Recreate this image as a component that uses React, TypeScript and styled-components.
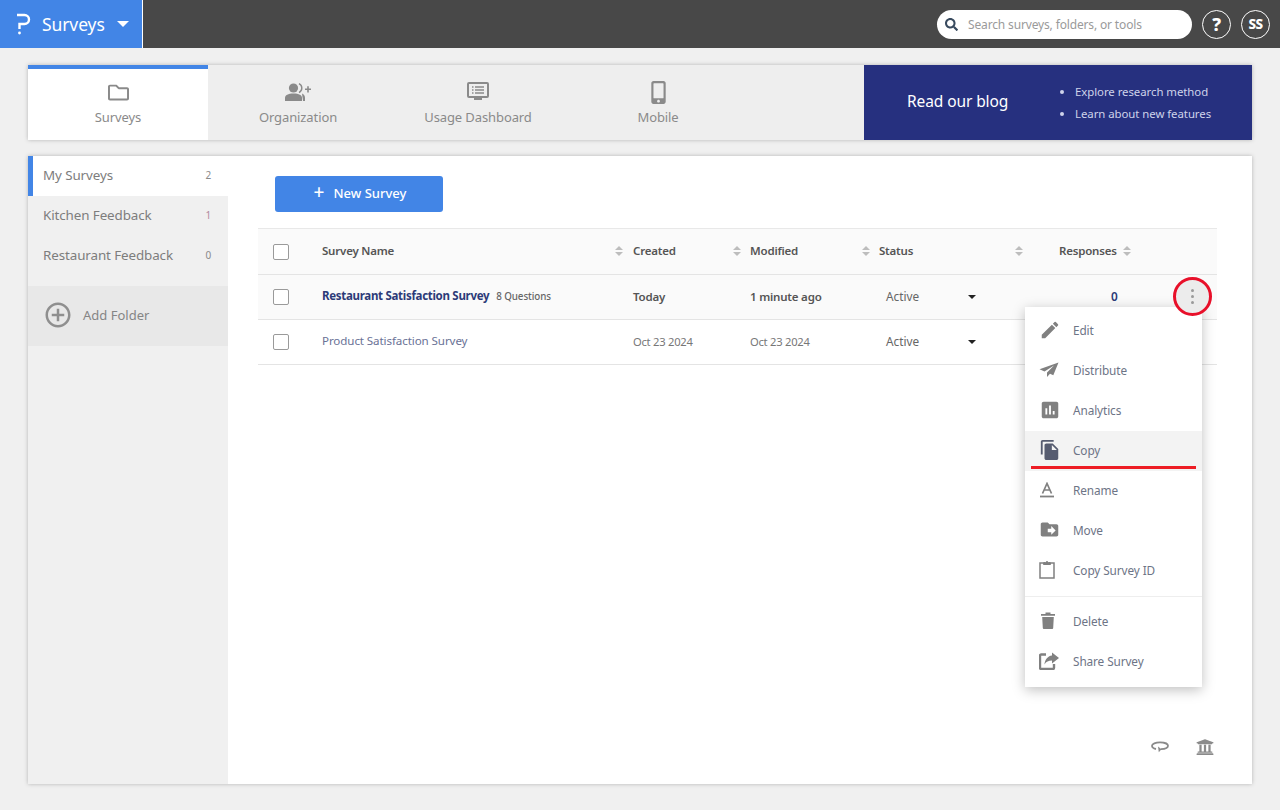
import React from "react";
import styled, { createGlobalStyle } from "styled-components";
import { FaRegFolder, FaSearch, FaUniversity, FaMobileAlt } from "react-icons/fa";
import { MdEdit, MdAssessment, MdFileCopy, MdDriveFileMove, MdAddCircleOutline } from "react-icons/md";

const Global = createGlobalStyle`
  html, body { margin: 0; padding: 0; background: #f0f0f0; }
  body { font-family: "Noto Sans", "Open Sans", sans-serif; width: 1280px; height: 810px; overflow: hidden; }
  * { box-sizing: border-box; }
`;

const Page = styled.div`display: flex; flex-direction: column; height: 810px;`;
const TopBar = styled.header`
  height: 48px; background: #484848; display: flex; align-items: center; justify-content: space-between; padding-right: 10px;
`;
const Brand = styled.div`
  width: 143px; height: 48px; background: #4285e6; border-right: 1px solid #fff; display: flex; align-items: center;
  padding-left: 16px; color: #fff; font-size: 17.5px; letter-spacing: -0.1px;
`;
const BrandName = styled.span`margin-left: 11px; margin-top: -1px;`;
const BrandCaret = styled.span`
  margin-left: 12px; width: 0; height: 0; border-left: 6px solid transparent; border-right: 6px solid transparent; border-top: 6px solid #fff;
`;
const TopRight = styled.div`display: flex; align-items: center; gap: 10px;`;
const Search = styled.div`
  width: 255px; height: 29px; border-radius: 15px; background: #fff; display: flex; align-items: center; padding-left: 8px;
  color: #9a9a9a; font-size: 12px; letter-spacing: -0.15px;
  svg { color: #384a5e; margin-right: 10px; }
`;
const RoundBtn = styled.div<{ $size: number }>`
  width: 29px; height: 29px; border-radius: 50%; border: 1px solid #fff; color: #fff; display: flex; align-items: center; justify-content: center;
  font-weight: 800; font-size: ${p => p.$size}px; letter-spacing: -0.5px;
`;

const Body = styled.main`flex: 1; padding: 17px 28px 26px; display: flex; flex-direction: column; gap: 16px;`;
const TabCard = styled.nav`height: 75px; display: flex; background: #eeeeee; box-shadow: 0 0 4px rgba(0,0,0,.25);`;
const Tab = styled.div<{ $active?: boolean }>`
  width: 180px; display: flex; flex-direction: column; align-items: center; color: #8a8a8a; font-size: 13px; letter-spacing: -0.1px;
  background: ${p => (p.$active ? "#fff" : "transparent")};
  border-top: 4px solid ${p => (p.$active ? "#4285e6" : "transparent")};
  padding-top: 10px;
`;
const TabIcon = styled.div`height: 26px; display: flex; align-items: center; justify-content: center; color: #8a8a8a; margin-bottom: 3px;`;
const Spacer = styled.div`flex: 1;`;
const Banner = styled.div`
  width: 388px; background: #26307f; display: flex; align-items: center; color: #fff; padding-left: 43px;
`;
const BannerTitle = styled.div`font-size: 15.5px; width: 152px; letter-spacing: -0.1px; margin-top: -3px;`;
const BannerList = styled.ul`
  margin: 0; padding: 0 0 0 16px; font-size: 11.4px; color: #cfd3ea; line-height: 21.5px; letter-spacing: -0.05px;
`;

const MainCard = styled.section`flex: 1; display: flex; background: #fff; box-shadow: 0 0 4px rgba(0,0,0,.25); position: relative;`;
const Sidebar = styled.aside`width: 200px; background: #f0f0f0; flex-shrink: 0;`;
const Folder = styled.div<{ $active?: boolean }>`
  height: 40px; display: flex; align-items: center; justify-content: space-between; padding: 0 17px 2px ${p => (p.$active ? "10px" : "15px")};
  background: ${p => (p.$active ? "#fff" : "transparent")}; border-left: ${p => (p.$active ? "5px solid #4285e6" : "0")};
  color: #7d7d7d; font-size: 13.4px; letter-spacing: -0.1px;
`;
const Count = styled.span<{ $color?: string }>`font-size: 10px; color: ${p => p.$color || "#8a8a8a"};`;
const AddFolder = styled.div`
  margin-top: 10px; height: 60px; background: #e8e8e8; display: flex; align-items: center; gap: 10px; padding: 0 0 2px 15px; color: #858585; font-size: 13px;
  svg { color: #8f8f8f; }
`;
const Content = styled.div`flex: 1; padding: 20px 35px 0 30px;`;
const NewButton = styled.div`
  margin-left: 17px; width: 168px; height: 36px; background: #4285e6; border-radius: 3px; color: #fff; font-weight: 500; font-size: 13px;
  display: flex; align-items: center; justify-content: center; gap: 9px; padding: 0 0 2px 2px;
`;
const Plus = styled.span`font-size: 19px; line-height: 19px; margin-top: -2px;`;
const Row = styled.div<{ $h: number; $bg?: string; $top?: boolean }>`
  display: grid; grid-template-columns: 64px 311px 117px 129px 180px 1fr; height: ${p => p.$h}px; align-items: center;
  background: ${p => p.$bg || "#fff"}; border-bottom: 1px solid #e4e4e4; ${p => (p.$top ? "border-top: 1px solid #e8e8e8; margin-top: 16px;" : "")}
  font-size: 11.8px; color: #777;
`;
const Check = styled.span`
  margin-left: 15px; width: 16px; height: 16px; border: 1px solid #9a9a9a; border-radius: 2px; background: #fff; display: block;
`;
const Cell = styled.div`margin-top: -2px;`;
const Head = styled.div<{ $pad?: number }>`
  display: flex; align-items: center; justify-content: space-between; padding-right: ${p => p.$pad ?? 9}px; font-weight: 600; color: #555; font-size: 11.5px; letter-spacing: -0.2px;
  margin-top: -2px;
`;
const Sort = styled.span`
  display: inline-flex; flex-direction: column; gap: 2px;
  &::before, &::after { content: ""; width: 0; height: 0; border-left: 4px solid transparent; border-right: 4px solid transparent; }
  &::before { border-bottom: 4px solid #bdbdbd; }
  &::after { border-top: 4px solid #bdbdbd; }
`;
const RespHead = styled(Head)`justify-content: flex-start; gap: 6px;`;
const NameCell = styled.div`margin-top: -4px;`;
const NameStrong = styled.span`font-weight: 700; color: #2c3a78; font-size: 11.5px; letter-spacing: -0.3px;`;
const Questions = styled.span`font-size: 9.8px; font-weight: 500; color: #666; margin-left: 7px; letter-spacing: -0.1px;`;
const NameLink = styled(NameCell)`color: #6a7296; font-size: 11.6px; letter-spacing: -0.1px;`;
const Strong = styled(Cell)`font-weight: 600; color: #555; font-size: 11.5px; letter-spacing: -0.2px;`;
const DateCell = styled(Cell)`font-size: 11.2px; letter-spacing: -0.25px;`;
const StatusCell = styled(Cell)`display: flex; align-items: center; padding-left: 7px; color: #666; width: 100px; justify-content: space-between;`;
const Caret = styled.span`
  width: 0; height: 0; border-left: 4px solid transparent; border-right: 4px solid transparent; border-top: 4px solid #222; margin-right: 3px; margin-top: 2px;
`;
const RespCell = styled(Cell)`padding-left: 52px; color: #2c3a78; font-weight: 600;`;

const Kebab = styled.div`
  position: absolute; left: 1145px; top: 121px; width: 39px; height: 39px; border-radius: 50%; border: 3px solid #e8102a;
  display: flex; flex-direction: column; align-items: center; justify-content: center; gap: 3px;
  background: #ececec;
`;
const Dot = styled.i`width: 3px; height: 3px; border-radius: 50%; background: #9a9a9a; display: block;`;
const Menu = styled.div`
  position: absolute; left: 997px; top: 151px; width: 177px; height: 380px; background: #fff; padding-top: 4px;
  box-shadow: 0 3px 12px rgba(0,0,0,.25);
`;
const MenuItem = styled.div<{ $hover?: boolean; $lift?: boolean }>`
  height: 40px; display: flex; align-items: center; padding: 0 0 ${p => (p.$lift ? 3 : 1)}px 14px; color: #6d7486; font-size: 11.8px; letter-spacing: -0.1px;
  background: ${p => (p.$hover ? "#f3f3f3" : "transparent")}; position: relative;
`;
const MenuIcon = styled.span`width: 34px; display: flex; align-items: center; color: #808080;`;
const TrashSlot = styled(MenuIcon)`padding-left: 2px;`;
const Divider = styled.div`height: 1px; background: #eee; margin: 5px 0 4px;`;
const RedLine = styled.div`position: absolute; left: 6px; right: 6px; bottom: 2px; height: 3px; background: #ed1c24;`;
const Footer = styled.div`
  position: absolute; right: 38px; bottom: 28px; display: flex; align-items: center; gap: 27px; color: #8a8a8a;
`;

const Plane = () => (
  <svg width="20" height="16" viewBox="0 0 20 16" fill="#808080"><path d="M19.5.5 .5 7.2l5 2.2L15 3.5 8 10.5v4.5l3-3.3 3.3 1.6z" /></svg>
);
const Logo = () => (
  <svg width="15" height="24" viewBox="0 0 15 24" fill="none" stroke="#fff" strokeWidth="2.4">
    <path d="M1 3h7.5a4.5 4.5 0 0 1 0 9H3.5v5" />
    <circle cx="3.5" cy="21" r="1.4" fill="#fff" stroke="none" />
  </svg>
);
const Monitor = () => (
  <svg width="22" height="20" viewBox="0 0 22 20" fill="none">
    <rect x="1" y="1" width="20" height="14" rx="1" stroke="#8a8a8a" strokeWidth="2" />
    <path d="M5 5h1.5M8 5h9M5 8h1.5M8 8h9M5 11h1.5M8 11h9" stroke="#8a8a8a" strokeWidth="1.4" />
    <path d="M7 16h8v2H7z" fill="#8a8a8a" />
  </svg>
);
const Org = () => (
  <svg width="26" height="18" viewBox="0 0 26 18" fill="#8a8a8a">
    <circle cx="8.5" cy="5" r="4.6" />
    <path d="M0 18v-3c0-3 3-4.6 8.5-4.6S17 12 17 15v3z" />
    <path d="M14 .6a5 5 0 0 1 0 9" fill="none" stroke="#8a8a8a" strokeWidth="1.4" />
    <path d="M17 10.5c2 .8 3 2.5 3 4.5v3h-2" />
    <path d="M20 5.500h2.200V3.200h1.600v2.300H26v1.600h-2.200v2.300h-1.600V7.100H20z" />
  </svg>
);
const Lasso = () => (
  <svg width="18" height="12" viewBox="0 0 18 12" fill="none" stroke="#8a8a8a" strokeWidth="1.8">
    <path d="M5 8C2.500 7.500 1 6.200 1 4.800 1 2.800 4.600 1.400 9 1.400s8 1.400 8 3.400-3.200 3.300-7 3.400" />
    <path d="M7 5.500l3.500 2.700-2.700 3z" fill="#8a8a8a" stroke="none" />
  </svg>
);
const RenameIcon = () => (
  <svg width="16" height="16" viewBox="0 0 16 16" fill="none" stroke="#808080" strokeWidth="1.7">
    <path d="M3.500 11.500 8 1.500l4.500 10M5 8h6" />
    <path d="M1 14.500h14" strokeWidth="1.8" />
  </svg>
);
const ClipIcon = () => (
  <svg width="16" height="19" viewBox="0 0 16 19" fill="none" stroke="#808080" strokeWidth="1.5">
    <path d="M4.500 3H1v15h14V3h-3.500" />
    <path d="M4.500 4.500V2.500h2.200a1.400 1.400 0 0 1 2.600 0h2.200v2z" fill="#808080" strokeWidth="1" />
  </svg>
);
const TrashIcon = () => (
  <svg width="14" height="17" viewBox="0 0 14 17" fill="#808080">
    <path d="M0 2h4.500V.6h5V2H14v1.800H0z" />
    <path d="M1.200 5h11.600l-.6 11a1 1 0 0 1-1 1H2.800a1 1 0 0 1-1-1z" />
  </svg>
);
const ShareIcon = () => (
  <svg width="20" height="18" viewBox="0 0 20 18" fill="none">
    <path d="M7 2.500H2.200A1.200 1.200 0 0 0 1 3.700V15.800A1.200 1.200 0 0 0 2.200 17h11.600a1.200 1.200 0 0 0 1.200-1.200V12" stroke="#808080" strokeWidth="2.400" />
    <path d="M13 .5l7 5.500-7 5.500V8.500C9.500 8.500 7 9.500 5.500 12.500 5.800 8 8.500 4 13 3.500z" fill="#808080" />
  </svg>
);

const menu = [
  { label: "Edit", icon: <MdEdit size={22} /> },
  { label: "Distribute", icon: <Plane /> },
  { label: "Analytics", icon: <MdAssessment size={22} /> },
  { label: "Copy", icon: <MdFileCopy size={22} color="#565c70" />, hover: true },
  { label: "Rename", icon: <RenameIcon /> },
  { label: "Move", icon: <MdDriveFileMove size={21} /> },
  { label: "Copy Survey ID", icon: <ClipIcon /> },
];

export default function App() {
  return (
    <Page>
      <Global />
      <TopBar>
        <Brand><Logo /><BrandName>Surveys</BrandName><BrandCaret /></Brand>
        <TopRight>
          <Search><FaSearch size={13} />Search surveys, folders, or tools</Search>
          <RoundBtn $size={18}>?</RoundBtn>
          <RoundBtn $size={13.5}>SS</RoundBtn>
        </TopRight>
      </TopBar>
      <Body>
        <TabCard>
          <Tab $active><TabIcon><FaRegFolder size={21} /></TabIcon>Surveys</Tab>
          <Tab><TabIcon><Org /></TabIcon>Organization</Tab>
          <Tab><TabIcon><Monitor /></TabIcon>Usage Dashboard</Tab>
          <Tab><TabIcon><FaMobileAlt size={23} /></TabIcon>Mobile</Tab>
          <Spacer />
          <Banner>
            <BannerTitle>Read our blog</BannerTitle>
            <BannerList><li>Explore research method</li><li>Learn about new features</li></BannerList>
          </Banner>
        </TabCard>
        <MainCard>
          <Sidebar>
            <Folder $active>My Surveys<Count>2</Count></Folder>
            <Folder>Kitchen Feedback<Count $color="#b08aa0">1</Count></Folder>
            <Folder>Restaurant Feedback<Count>0</Count></Folder>
            <AddFolder><MdAddCircleOutline size={30} />Add Folder</AddFolder>
          </Sidebar>
          <Content>
            <NewButton><Plus>+</Plus>New Survey</NewButton>
            <Row $h={47} $bg="#fafafa" $top>
              <Check />
              <Head $pad={10}>Survey Name<Sort /></Head>
              <Head>Created<Sort /></Head>
              <Head>Modified<Sort /></Head>
              <Head $pad={36}>Status<Sort /></Head>
              <RespHead>Responses<Sort /></RespHead>
            </Row>
            <Row $h={45} $bg="#fafafa">
              <Check />
              <NameCell><NameStrong>Restaurant Satisfaction Survey</NameStrong><Questions>8 Questions</Questions></NameCell>
              <Strong>Today</Strong>
              <Strong>1 minute ago</Strong>
              <StatusCell>Active<Caret /></StatusCell>
              <RespCell>0</RespCell>
            </Row>
            <Row $h={45}>
              <Check />
              <NameLink>Product Satisfaction Survey</NameLink>
              <DateCell>Oct 23 2024</DateCell>
              <DateCell>Oct 23 2024</DateCell>
              <StatusCell>Active<Caret /></StatusCell>
              <span />
            </Row>
          </Content>
          <Menu>
            {menu.map(m => (
              <MenuItem key={m.label} $hover={m.hover} $lift>
                <MenuIcon>{m.icon}</MenuIcon>{m.label}
                {m.hover && <RedLine />}
              </MenuItem>
            ))}
            <Divider />
            <MenuItem><TrashSlot><TrashIcon /></TrashSlot>Delete</MenuItem>
            <MenuItem><MenuIcon><ShareIcon /></MenuIcon>Share Survey</MenuItem>
          </Menu>
          <Kebab><Dot /><Dot /><Dot /></Kebab>
          <Footer><Lasso /><FaUniversity size={18} /></Footer>
        </MainCard>
      </Body>
    </Page>
  );
}
